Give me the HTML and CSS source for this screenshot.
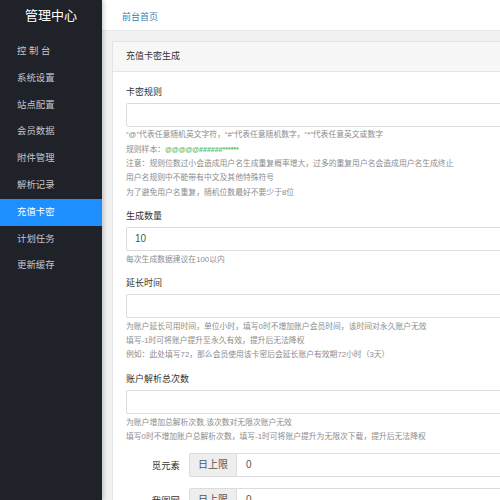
FILE: index.html
```html
<!DOCTYPE html>
<html lang="zh-CN">
<head>
<meta charset="utf-8">
<title>充值卡密生成</title>
<link rel="stylesheet" href="styles.css">
</head>
<body>
<aside class="sidebar">
  <div class="brand">管理中心</div>
  <nav class="nav">
    <a class="nav-item">控 制 台</a>
    <a class="nav-item">系统设置</a>
    <a class="nav-item">站点配置</a>
    <a class="nav-item">会员数据</a>
    <a class="nav-item">附件管理</a>
    <a class="nav-item">解析记录</a>
    <a class="nav-item active">充值卡密</a>
    <a class="nav-item">计划任务</a>
    <a class="nav-item">更新缓存</a>
  </nav>
</aside>
<main class="main">
  <header class="topbar"><a class="top-link">前台首页</a></header>
  <section class="content">
    <div class="panel">
      <div class="panel-head">充值卡密生成</div>
      <div class="panel-body">
        <div class="group">
          <label class="label">卡密规则</label>
          <div class="input"></div>
          <div class="help">
            <p>“@”代表任意随机英文字符，“#”代表任意随机数字，“*”代表任意英文或数字</p>
            <p>规则样本：<span class="sample">@@@@@######******</span></p>
            <p>注意：规则位数过小会造成用户名生成重复概率增大，过多的重复用户名会造成用户名生成终止</p>
            <p>用户名规则中不能带有中文及其他特殊符号</p>
            <p>为了避免用户名重复，随机位数最好不要少于8位</p>
          </div>
        </div>
        <div class="group">
          <label class="label">生成数量</label>
          <div class="input">10</div>
          <div class="help">
            <p>每次生成数据建议在100以内</p>
          </div>
        </div>
        <div class="group">
          <label class="label">延长时间</label>
          <div class="input"></div>
          <div class="help">
            <p>为账户延长可用时间，单位小时，填写0时不增加账户会员时间，该时间对永久账户无效</p>
            <p>填写-1时可将账户提升至永久有效，提升后无法降权</p>
            <p>例如：此处填写72，那么会员使用该卡密后会延长账户有效期72小时（3天）</p>
          </div>
        </div>
        <div class="group">
          <label class="label">账户解析总次数</label>
          <div class="input"></div>
          <div class="help">
            <p>为账户增加总解析次数,该次数对无限次账户无效</p>
            <p>填写0时不增加账户总解析次数，填写-1时可将账户提升为无限次下载，提升后无法降权</p>
          </div>
        </div>
        <div class="row">
          <span class="row-label">觅元素</span>
          <div class="input-group">
            <span class="addon">日上限</span>
            <div class="input grouped">0</div>
          </div>
        </div>
        <div class="row">
          <span class="row-label">我图网</span>
          <div class="input-group">
            <span class="addon">日上限</span>
            <div class="input grouped">0</div>
          </div>
        </div>
      </div>
    </div>
  </section>
</main>
</body>
</html>
```
FILE: styles.css
```css
* { box-sizing: border-box; }
html, body { margin: 0; padding: 0; }
body {
  width: 500px;
  height: 500px;
  overflow: hidden;
  display: flex;
  font-family: "Liberation Sans", "Noto Sans CJK SC", sans-serif;
  color: #333;
  background: #f1f1f1;
}
p { margin: 0; }

.sidebar {
  width: 102px;
  flex: none;
  height: 500px;
  background: #20222a;
  box-shadow: 2px 0 4px rgba(0, 0, 0, 0.18);
  position: relative;
  z-index: 1;
}
.brand {
  height: 38px;
  line-height: 32px;
  text-align: center;
  color: #fff;
  font-size: 13px;
}
.nav { display: flex; flex-direction: column; }
.nav-item {
  height: 26.8px;
  line-height: 26.8px;
  padding-left: 17px;
  font-size: 9.4px;
  color: #c4c6cc;
}
.nav-item.active {
  background: #1e8fff;
  color: #fff;
}

.main {
  flex: none;
  width: 430px;
  display: flex;
  flex-direction: column;
}
.topbar {
  height: 31px;
  background: #fff;
  border-bottom: 1px solid #e8e8e8;
  padding-left: 20px;
  line-height: 30px;
}
.top-link {
  font-size: 9px;
  color: #3a7bb5;
}
.content {
  padding: 10px 0 0 10px;
}
.panel {
  width: 420px;
  border: 1px solid #e4e4e4;
  background: #fff;
}
.panel-head {
  height: 30px;
  line-height: 29px;
  padding-left: 13px;
  font-size: 9px;
  background: #f7f7f7;
  border-bottom: 1px solid #e4e4e4;
}
.panel-body {
  padding: 12.7px 0 0 13px;
}
.group { margin-bottom: 9px; }
.label {
  display: block;
  font-size: 9px;
  line-height: 14px;
  margin-bottom: 4.3px;
  color: #333;
}
.input {
  height: 24px;
  border: 1px solid #dcdcdc;
  border-radius: 2px;
  padding-left: 8px;
  font-size: 10px;
  line-height: 22px;
  color: #555;
}
.help {
  margin-top: 1.5px;
  font-size: 7.8px;
  line-height: 14.3px;
  color: #8c8c8c;
}
.sample {
  color: #5cb85c;
  font-weight: bold;
  font-size: 7px;
}
.row {
  display: flex;
  align-items: center;
  margin-bottom: 11px;
}
.row-label {
  width: 54px;
  text-align: right;
  font-size: 9.4px;
  color: #333;
  margin-right: 9px;
}
.input-group {
  flex: 1;
  display: flex;
  height: 24px;
}
.addon {
  width: 48px;
  flex: none;
  background: #eeeeee;
  border: 1px solid #dcdcdc;
  border-radius: 2px 0 0 2px;
  text-align: center;
  font-size: 10px;
  line-height: 22px;
  color: #555;
}
.input.grouped {
  flex: 1;
  border-left: none;
  border-radius: 0 2px 2px 0;
  padding-left: 9px;
}
```
